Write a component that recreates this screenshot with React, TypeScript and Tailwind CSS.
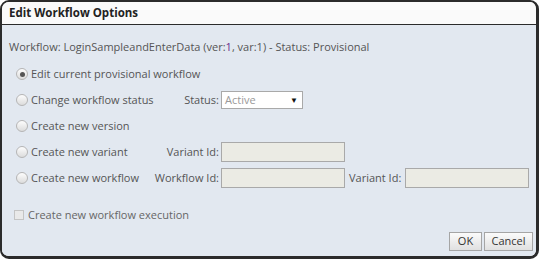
import { FC } from "react";

const Radio: FC<{ checked?: boolean }> = ({ checked }) => (
  <span className="flex h-[12px] w-[12px] shrink-0 items-center justify-center rounded-full border border-[#b5b5b5] bg-gradient-to-b from-[#fdfdfd] to-[#dcdcdc]">
    {checked && <span className="h-[5px] w-[5px] rounded-full bg-[#555]" />}
  </span>
);

const Field: FC<{ w: string }> = ({ w }) => (
  <div className={`h-[20px] ${w} border border-[#a9a9a9] bg-[#ebebe4]`} />
);

const App: FC = () => {
  return (
    <div className="h-[259px] w-[539px] bg-white font-['Open_Sans',sans-serif] text-[11px] text-[#555]">
      <div className="flex h-full w-full flex-col overflow-hidden rounded-[9px] border-2 border-r-[3px] border-b-[3px] border-[#2b2b2b]">
        <header className="flex h-[23px] shrink-0 items-center border-b-[1.5px] border-[#2b2b2b] bg-[#fafafa] pl-[7px] text-[11.5px] font-bold text-[#222]">
          Edit Workflow Options
        </header>
        <div className="flex flex-1 flex-col bg-[#e2e8f0] pl-[7px] pr-[3px]">
          <p className="mt-[15px] h-[14px] whitespace-nowrap leading-[14px]">
            Workflow: LoginSampleandEnterData (ver:<span className="text-[#6a2b8c]">1</span>, var:1) - Status: Provisional
          </p>
          <div className="mt-[7px] flex flex-col whitespace-nowrap">
            <div className="flex h-[26px] items-center">
              <div className="flex w-[144px] items-center gap-[3px] pl-[7px]">
                <Radio checked />
                <span>Edit current provisional workflow</span>
              </div>
            </div>
            <div className="flex h-[26px] items-center">
              <div className="flex w-[144px] items-center gap-[3px] pl-[7px]">
                <Radio />
                <span>Change workflow status</span>
              </div>
              <span className="w-[66px] text-right">Status:</span>
              <div className="ml-[2px] flex h-[18px] w-[82px] items-center justify-between border border-[#a9a9a9] bg-white pl-[3px] pr-[4px] text-[#999]">
                <span>Active</span>
                <span className="text-[8px] text-[#111]">▼</span>
              </div>
            </div>
            <div className="flex h-[26px] items-center">
              <div className="flex w-[144px] items-center gap-[3px] pl-[7px]">
                <Radio />
                <span>Create new version</span>
              </div>
            </div>
            <div className="flex h-[26px] items-center">
              <div className="flex w-[144px] items-center gap-[3px] pl-[7px]">
                <Radio />
                <span>Create new variant</span>
              </div>
              <span className="w-[66px] text-right">Variant Id:</span>
              <div className="ml-[2px]">
                <Field w="w-[124px]" />
              </div>
            </div>
            <div className="flex h-[26px] items-center">
              <div className="flex w-[144px] items-center gap-[3px] pl-[7px]">
                <Radio />
                <span>Create new workflow</span>
              </div>
              <span className="w-[66px] text-right">Workflow Id:</span>
              <div className="ml-[2px]">
                <Field w="w-[124px]" />
              </div>
              <span className="ml-[4px] w-[56px]">Variant Id:</span>
              <Field w="w-[124px]" />
            </div>
          </div>
          <div className="mt-[16px] flex items-center gap-[4px] whitespace-nowrap pl-[5px]">
            <span className="h-[10px] w-[10px] border border-[#c4c4c4] bg-[#e9e9e9]" />
            <span className="text-[#666]">Create new workflow execution</span>
          </div>
          <div className="mt-auto mb-[5px] flex justify-end gap-[2px]">
            <button className="h-[19px] w-[33px] border border-[#a5a5a5] bg-gradient-to-b from-[#fbfbfb] to-[#e0e0e0] text-[11px] text-[#333]">
              OK
            </button>
            <button className="h-[19px] w-[49px] border border-[#a5a5a5] bg-gradient-to-b from-[#fbfbfb] to-[#e0e0e0] text-[11px] text-[#333]">
              Cancel
            </button>
          </div>
        </div>
      </div>
    </div>
  );
};

export default App;
